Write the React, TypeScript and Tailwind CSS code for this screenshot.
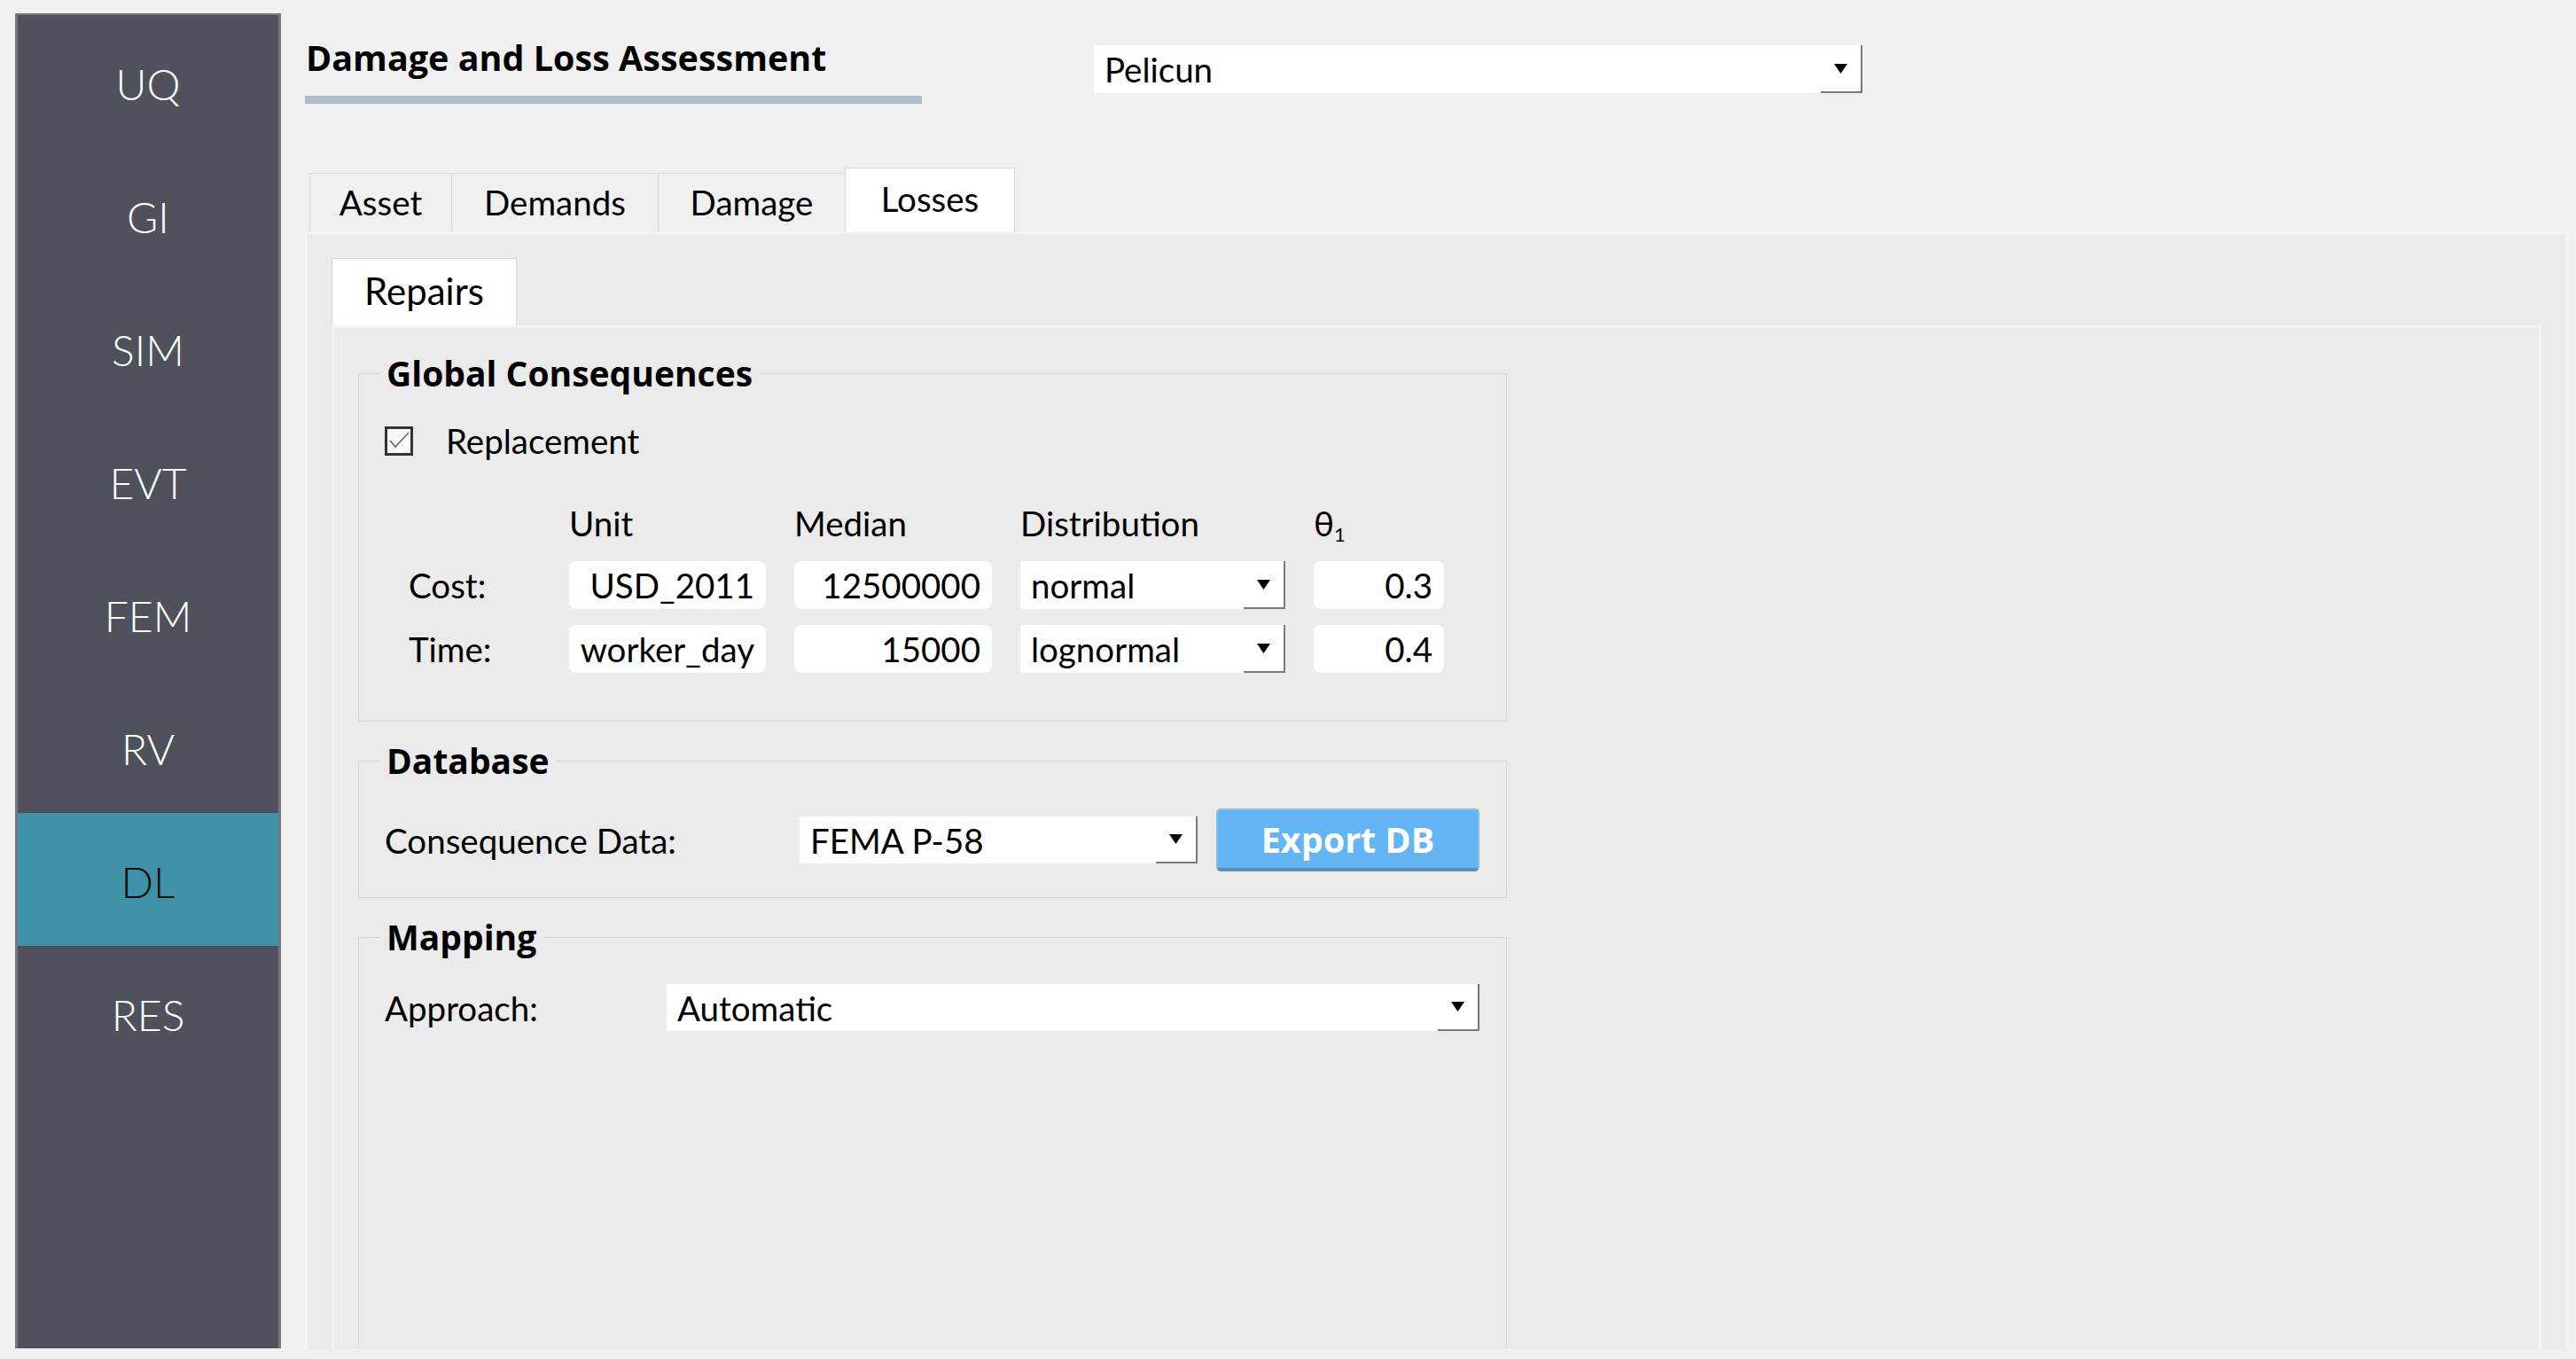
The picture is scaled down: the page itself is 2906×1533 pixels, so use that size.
import React from "react";

const Arrow = () => (
  <svg width="15" height="11" viewBox="0 0 15 11">
    <path d="M0 0 H15 L7.5 11 Z" fill="#000" />
  </svg>
);

function Combo({ text, className }: { text: string; className: string }) {
  return (
    <div className={`flex bg-white ${className}`}>
      <div className="flex-1 pl-[12px] flex items-center leading-[46px]">{text}</div>
      <div className="w-[47px] flex items-center justify-center border-r-2 border-b-2 border-[#7a7a7a]">
        <Arrow />
      </div>
    </div>
  );
}

function Field({ text }: { text: string }) {
  return (
    <div className="h-[54px] bg-white rounded-[8px] flex items-center justify-end pr-[13px] leading-[46px] whitespace-nowrap">
      {text}
    </div>
  );
}

const sideItems = ["UQ", "GI", "SIM", "EVT", "FEM", "RV", "DL", "RES"];

export default function App() {
  return (
    <div className="w-[2906px] h-[1533px] bg-[#f0f0f0] flex items-start overflow-hidden font-['Lato',sans-serif] text-black text-[38.5px]">
      <nav className="mt-[15px] ml-[17px] w-[300px] h-[1506px] bg-[#4f525a] border-x-[3px] border-t-2 border-[#74777d] flex flex-col">
        {sideItems.map((s) => (
          <div
            key={s}
            className={
              s === "DL"
                ? "h-[150px] pt-[6px] flex items-center justify-center text-[48px] font-light bg-[#3e91a6] text-[#0a0a0a]"
                : "h-[150px] pt-[6px] flex items-center justify-center text-[48px] font-light text-white"
            }
          >
            {s}
          </div>
        ))}
      </nav>

      <main className="ml-[27px] w-[2553px] h-[1521px] flex flex-col">
        <div className="flex items-start h-[117px]">
          <div className="w-[697px] pt-[42px]">
            <div className="pl-[1px] font-['Open_Sans',sans-serif] font-bold text-[39.5px] leading-[46px] whitespace-nowrap">Damage and Loss Assessment</div>
            <div className="mt-[20px] w-[696px] h-[9px] bg-[#b0bec5]" />
          </div>
          <Combo text="Pelicun" className="ml-[193px] mt-[51px] w-[867px] h-[54px]" />
        </div>

        <div className="mt-[72px] h-[72px] pl-[5px] flex items-end">
          <div className="w-[160px] h-[66px] border-t border-l border-[#d9d9d9] flex justify-center pt-[9px] leading-[46px]">Asset</div>
          <div className="w-[233px] h-[66px] border-t border-l border-[#d9d9d9] flex justify-center pt-[9px] leading-[46px]">Demands</div>
          <div className="w-[211px] h-[66px] border-t border-l border-[#d9d9d9] flex justify-center pt-[9px] leading-[46px]">Damage</div>
          <div className="w-[192px] h-[72px] bg-white border-x border-t border-[#d9d9d9] flex justify-center pt-[11px] leading-[46px]">Losses</div>
        </div>

        <div className="flex-1 min-h-0 bg-[#ebebeb] border-x-[3px] border-t-[3px] border-[#f4f4f4] pt-[27px] px-[27px] flex flex-col overflow-hidden">
          <div className="w-[209px] h-[76px] shrink-0 bg-white border-x border-t border-[#d9d9d9] flex justify-center pt-[11px] text-[42px] leading-[50px]">Repairs</div>

          <div className="flex-1 min-h-0 bg-[#ebebeb] border-x-[3px] border-t-[3px] border-[#f4f4f4] pl-[27px] pt-[28px] overflow-hidden">
            <fieldset className="w-[1296px] border border-[#d9d9d9] pl-[23px] pb-[54px]">
              <legend className="px-[8px] pr-[7px] font-['Open_Sans',sans-serif] font-bold text-[39px] leading-[46px]">Global Consequences</legend>
              <div className="mt-[30px] ml-[6px] h-[46px] flex items-center">
                <div className="w-[32px] h-[33px] border-[3px] border-[#333333] bg-[#f7f7f7] flex items-center justify-center">
                  <svg width="26" height="27" viewBox="0 0 26 27">
                    <polyline points="3,13 9,20 24,4" fill="none" stroke="#666666" strokeWidth="1.6" />
                  </svg>
                </div>
                <span className="ml-[37px] leading-[46px]">Replacement</span>
              </div>

              <div className="mt-[47px] ml-[33px] grid grid-cols-[149px_222px_223px_299px_147px] gap-x-[32px] gap-y-[18px] items-center">
                <div className="h-[48px]" />
                <div className="h-[48px] leading-[46px]">Unit</div>
                <div className="h-[48px] leading-[46px]">Median</div>
                <div className="h-[48px] leading-[46px]">Distribution</div>
                <div className="h-[48px] leading-[46px]">
                  θ<sub className="text-[22px]">1</sub>
                </div>

                <div className="leading-[46px]">Cost:</div>
                <Field text="USD_2011" />
                <Field text="12500000" />
                <Combo text="normal" className="h-[54px]" />
                <Field text="0.3" />

                <div className="leading-[46px]">Time:</div>
                <Field text="worker_day" />
                <Field text="15000" />
                <Combo text="lognormal" className="h-[54px]" />
                <Field text="0.4" />
              </div>
            </fieldset>

            <fieldset className="mt-[21px] w-[1296px] border border-[#d9d9d9] pl-[23px] pb-[29px]">
              <legend className="px-[8px] pr-[7px] font-['Open_Sans',sans-serif] font-bold text-[39px] leading-[46px]">Database</legend>
              <div className="mt-[31px] ml-[6px] h-[71px] flex items-center">
                <div className="w-[468px] leading-[46px]">Consequence Data:</div>
                <Combo text="FEMA P-58" className="w-[449px] h-[53px]" />
                <div className="ml-[21px] w-[297px] h-[71px] bg-[#64b5f6] rounded-[5px] border-2 border-[#8dbfdc] border-b-[4px] border-b-[#5f8fae] text-white font-['Open_Sans',sans-serif] font-bold text-[39.5px] flex items-center justify-center leading-[46px]">
                  Export DB
                </div>
              </div>
            </fieldset>

            <fieldset className="mt-[21px] w-[1296px] border border-[#d9d9d9] pl-[23px] pb-[500px]">
              <legend className="px-[8px] pr-[7px] font-['Open_Sans',sans-serif] font-bold text-[39px] leading-[46px]">Mapping</legend>
              <div className="mt-[30px] ml-[6px] h-[53px] flex items-center">
                <div className="w-[318px] leading-[46px]">Approach:</div>
                <Combo text="Automatic" className="w-[917px] h-[53px]" />
              </div>
            </fieldset>
          </div>
        </div>
      </main>
    </div>
  );
}
